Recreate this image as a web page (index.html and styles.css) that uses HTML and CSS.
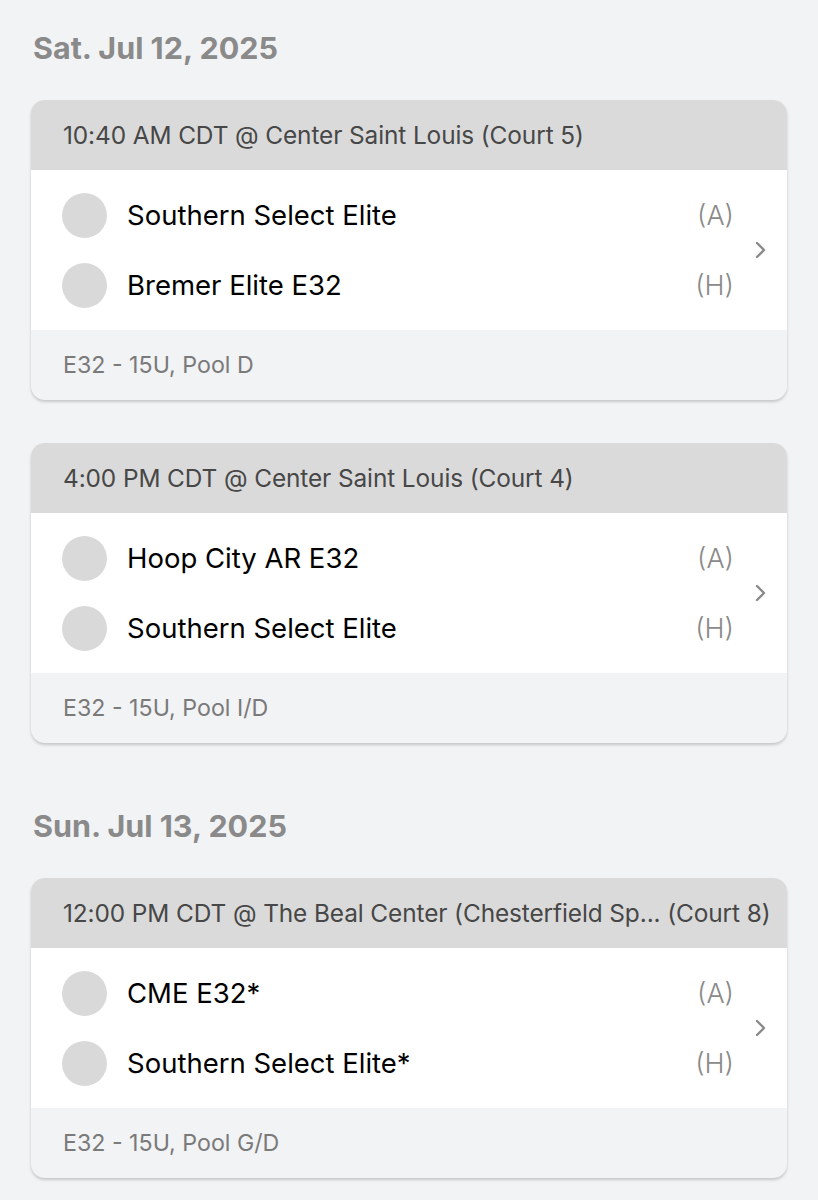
FILE: index.html
```html
<!DOCTYPE html>
<html lang="en">
<head>
  <meta charset="UTF-8">
  <meta name="viewport" content="width=device-width, initial-scale=1.0">
  <title>Schedule</title>
  <link rel="stylesheet" href="styles.css">
</head>
<body>
  <div class="schedule">
    <section class="day">
      <h2 class="day-title">Sat. Jul 12, 2025</h2>

      <div class="game">
        <div class="game-head">10:40 AM CDT @ Center Saint Louis (Court 5)</div>
        <div class="game-body">
          <div class="teams">
            <div class="team"><span class="logo"></span><span class="name">Southern Select Elite</span><span class="side">(A)</span></div>
            <div class="team"><span class="logo"></span><span class="name">Bremer Elite E32</span><span class="side">(H)</span></div>
          </div>
          <svg class="chevron" width="12" height="18" viewBox="0 0 12 18"><path d="M2 2l7 7-7 7" fill="none" stroke="#8a8a8a" stroke-width="2.4" stroke-linecap="round" stroke-linejoin="round"/></svg>
        </div>
        <div class="game-foot">E32 - 15U, Pool D</div>
      </div>

      <div class="game">
        <div class="game-head">4:00 PM CDT @ Center Saint Louis (Court 4)</div>
        <div class="game-body">
          <div class="teams">
            <div class="team"><span class="logo"></span><span class="name">Hoop City AR E32</span><span class="side">(A)</span></div>
            <div class="team"><span class="logo"></span><span class="name">Southern Select Elite</span><span class="side">(H)</span></div>
          </div>
          <svg class="chevron" width="12" height="18" viewBox="0 0 12 18"><path d="M2 2l7 7-7 7" fill="none" stroke="#8a8a8a" stroke-width="2.4" stroke-linecap="round" stroke-linejoin="round"/></svg>
        </div>
        <div class="game-foot">E32 - 15U, Pool I/D</div>
      </div>
    </section>

    <section class="day">
      <h2 class="day-title">Sun. Jul 13, 2025</h2>

      <div class="game">
        <div class="game-head">12:00 PM CDT @ The Beal Center (Chesterfield Sp... (Court 8)</div>
        <div class="game-body">
          <div class="teams">
            <div class="team"><span class="logo"></span><span class="name">CME E32*</span><span class="side">(A)</span></div>
            <div class="team"><span class="logo"></span><span class="name">Southern Select Elite*</span><span class="side">(H)</span></div>
          </div>
          <svg class="chevron" width="12" height="18" viewBox="0 0 12 18"><path d="M2 2l7 7-7 7" fill="none" stroke="#8a8a8a" stroke-width="2.4" stroke-linecap="round" stroke-linejoin="round"/></svg>
        </div>
        <div class="game-foot">E32 - 15U, Pool G/D</div>
      </div>
    </section>
  </div>
</body>
</html>
```

FILE: styles.css
```css
body {
  font-family: Inter, "Noto Sans", sans-serif;
  margin: 0;
  padding: 0;
  background-color: #f2f3f5;
  color: #000;
}

.schedule {
  padding: 28px 31px 0;
}

.day {
  display: flex;
  flex-direction: column;
  gap: 43px;
  margin-bottom: 63px;
}

.day-title {
  margin: 0 0 -11px 2px;
  font-size: 30.5px;
  line-height: 40px;
  font-weight: 700;
  color: #8a8a8a;
}

.game {
  background-color: #f2f3f5;
  border-radius: 14px;
  overflow: hidden;
  box-shadow: 0 2px 3px rgba(0, 0, 0, 0.18);
}

.game-head {
  height: 70px;
  display: flex;
  align-items: center;
  padding: 0 12px 0 32px;
  background-color: #dadada;
  color: #474747;
  font-size: 24.4px;
  letter-spacing: -0.1px;
  white-space: nowrap;
}

.game-body {
  display: flex;
  align-items: center;
  gap: 21px;
  padding: 10px 20px 10px 31px;
  background-color: #fff;
}

.teams {
  flex: 1;
}

.team {
  height: 70px;
  display: flex;
  align-items: center;
}

.logo {
  width: 45px;
  height: 45px;
  border-radius: 50%;
  background-color: #d9d9d9;
  margin-right: 20px;
}

.name {
  flex: 1;
  font-size: 27.5px;
}

.side {
  font-size: 27px;
  font-weight: 300;
  color: #8a8a8a;
}

.chevron {
  display: block;
}

.game-foot {
  height: 70px;
  display: flex;
  align-items: center;
  padding: 0 32px;
  color: #7a7a7a;
  font-size: 23.2px;
}
```
